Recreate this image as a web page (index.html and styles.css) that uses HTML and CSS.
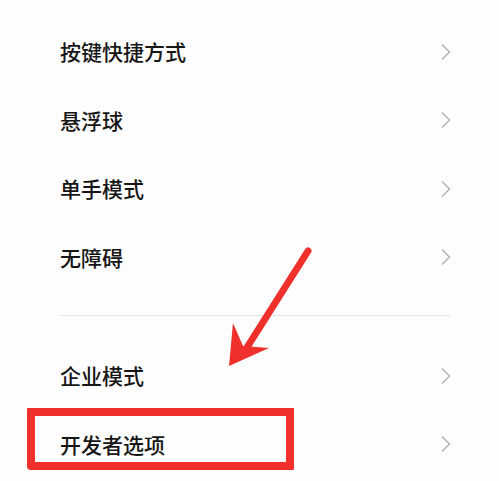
FILE: index.html
```html
<!DOCTYPE html>
<html lang="zh">
<head>
<meta charset="utf-8">
<link rel="stylesheet" href="styles.css">
</head>
<body>
<div class="page">
  <div class="group first">
    <div class="row"><span class="label">按键快捷方式</span><svg class="chev" viewBox="0 0 10 16"><polyline points="1.5,1 8.5,8 1.5,15"/></svg></div>
    <div class="row"><span class="label">悬浮球</span><svg class="chev" viewBox="0 0 10 16"><polyline points="1.5,1 8.5,8 1.5,15"/></svg></div>
    <div class="row"><span class="label">单手模式</span><svg class="chev" viewBox="0 0 10 16"><polyline points="1.5,1 8.5,8 1.5,15"/></svg></div>
    <div class="row"><span class="label">无障碍</span><svg class="chev" viewBox="0 0 10 16"><polyline points="1.5,1 8.5,8 1.5,15"/></svg></div>
  </div>
  <div class="divider"></div>
  <div class="group">
    <div class="row"><span class="label">企业模式</span><svg class="chev" viewBox="0 0 10 16"><polyline points="1.5,1 8.5,8 1.5,15"/></svg></div>
    <div class="row"><span class="label">开发者选项</span><svg class="chev" viewBox="0 0 10 16"><polyline points="1.5,1 8.5,8 1.5,15"/></svg></div>
  </div>
  <div class="highlight"></div>
  <svg class="arrow" viewBox="0 0 499 481" width="499" height="481">
    <line x1="308" y1="251" x2="246" y2="349"/>
    <polygon points="229,366 233,323 243,346 269,348"/>
  </svg>
</div>
</body>
</html>
```

FILE: styles.css
```css
html, body {
  margin: 0;
  padding: 0;
  background: #fdfdfd;
}
.page {
  position: relative;
  width: 499px;
  height: 481px;
  overflow: hidden;
  font-family: "Noto Sans CJK SC", "Noto Sans", sans-serif;
}
.group.first {
  padding-top: 17.5px;
}
.row {
  height: 68.5px;
  display: flex;
  align-items: center;
  justify-content: space-between;
  padding: 0 48px 0 60px;
}
.label {
  font-size: 21px;
  font-weight: 500;
  color: #161616;
  line-height: 1;
}
.chev {
  width: 10px;
  height: 16px;
  fill: none;
  stroke: #b3b3b3;
  stroke-width: 1.5;
  stroke-linecap: round;
  stroke-linejoin: round;
}
.divider {
  height: 1px;
  background: #e4e4e4;
  margin: 23px 48px 26px 60px;
}
.highlight {
  position: absolute;
  left: 27px;
  top: 408px;
  width: 267px;
  height: 62px;
  box-sizing: border-box;
  border: 8.5px solid #f0302a;
  border-radius: 1px 1px 1px 4px;
}
.arrow {
  position: absolute;
  left: 0;
  top: 0;
}
.arrow line {
  stroke: #f0302a;
  stroke-width: 7;
  stroke-linecap: round;
}
.arrow polygon {
  fill: #f0302a;
}
```
